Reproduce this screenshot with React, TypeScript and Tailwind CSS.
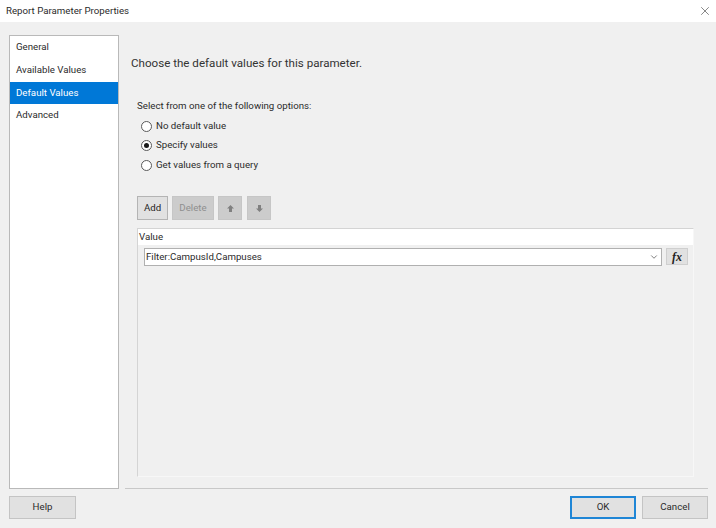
import { X, ChevronDown } from 'lucide-react';

const navItems = ['General', 'Available Values', 'Default Values', 'Advanced'];

const options = [
  { label: 'No default value', checked: false, cls: 'h-[20px]' },
  { label: 'Specify values', checked: true, cls: 'h-[20px] mt-[-1px]' },
  { label: 'Get values from a query', checked: false, cls: 'h-[20px]' },
];

function Radio({ label, checked, cls }: { label: string; checked: boolean; cls: string }) {
  return (
    <div className={`flex items-center gap-[4px] ${cls}`}>
      <span className="flex h-[11px] w-[11px] items-center justify-center rounded-full border border-[#5a5a5a] bg-white">
        {checked && <span className="h-[5px] w-[5px] rounded-full bg-[#1a1a1a]" />}
      </span>
      <span>{label}</span>
    </div>
  );
}

function ArrowIcon({ down }: { down?: boolean }) {
  return (
    <svg width="9" height="9" viewBox="0 0 9 9" className={down ? 'rotate-180' : ''}>
      <path d="M4.5 1 L8 4.5 H6 V8 H3 V4.5 H1 Z" fill="#808080" />
    </svg>
  );
}

export default function App() {
  return (
    <div className="flex h-[528px] w-[716px] flex-col overflow-hidden bg-[#f0f0f0] font-['Roboto',sans-serif] text-[9.7px] text-[#2b2b2b]">
      <div className="flex h-[22px] shrink-0 items-center justify-between bg-white pl-[6px] pr-[4px]">
        <span>Report Parameter Properties</span>
        <X size={14} strokeWidth={1.1} className="text-[#444]" />
      </div>

      <div className="flex h-[466px] shrink-0 pl-[9px] pr-[8px] pt-[13px]">
        <div className="h-[454px] w-[110px] shrink-0 border border-[#b9b9b9] bg-white">
          {navItems.map((item) => (
            <div
              key={item}
              className={`flex h-[22.75px] items-center pl-[6px] ${
                item === 'Default Values' ? 'bg-[#0078d7] text-white' : ''
              }`}
            >
              {item}
            </div>
          ))}
        </div>

        <div className="ml-[12px] flex min-w-0 flex-1 flex-col">
          <div className="mt-[18px] h-[20px] text-[11.6px] leading-[20px] text-[#333]">
            Choose the default values for this parameter.
          </div>
          <div className="ml-[6px] mt-[26px] h-[14px] leading-[14px]">Select from one of the following options:</div>
          <div className="ml-[10px] mt-[3px] flex flex-col">
            {options.map((o) => (
              <Radio key={o.label} {...o} />
            ))}
          </div>

          <div className="ml-[6px] mt-[21px] flex h-[24px] gap-[4px]">
            <button className="w-[31px] border border-[#b4b4b4] bg-[#e1e1e1] text-[#1f1f1f]">Add</button>
            <button className="w-[42px] border border-[#c6c6c6] bg-[#cccccc] text-[#8f8f8f]">Delete</button>
            <button className="flex w-[24px] items-center justify-center border border-[#c6c6c6] bg-[#cccccc]">
              <ArrowIcon />
            </button>
            <button className="ml-[1px] flex w-[24px] items-center justify-center border border-[#c6c6c6] bg-[#cccccc]">
              <ArrowIcon down />
            </button>
          </div>

          <div className="ml-[6px] mt-[8px] h-[249px] w-[557px] border-l border-t border-[#d4d4d4] border-r border-r-[#f7f7f7] border-b border-b-[#f7f7f7]">
            <div className="flex h-[16px] items-center bg-white pl-[1px]">Value</div>
            <div className="ml-[6px] mt-[3px] flex items-start">
              <div className="flex h-[18px] w-[518px] items-center justify-between border border-[#b0b0b0] bg-white pl-[1px] pr-[2px]">
                <span>Filter:CampusId,Campuses</span>
                <ChevronDown size={10} strokeWidth={1.8} className="text-[#555]" />
              </div>
              <div className="ml-[4px] flex h-[17px] w-[22px] items-center justify-center border border-[#cfcfcf] bg-[#e1e1e1] font-['Liberation_Serif',serif] text-[12px] font-bold italic text-[#222]">
                fx
              </div>
            </div>
          </div>
        </div>
      </div>

      <div className="flex justify-end pr-[8px]">
        <div className="h-[1px] w-[583px] bg-[#c8c8c8]" />
      </div>

      <div className="mt-[7px] flex h-[23px] justify-between pl-[9px] pr-[8px]">
        <button className="w-[67px] border border-[#c4c4c4] bg-[#e1e1e1]">Help</button>
        <div className="flex gap-[6px]">
          <button className="w-[66px] border-2 border-[#1f86d6] bg-[#e1e1e1]">OK</button>
          <button className="w-[66px] border border-[#c4c4c4] bg-[#e1e1e1]">Cancel</button>
        </div>
      </div>
    </div>
  );
}
